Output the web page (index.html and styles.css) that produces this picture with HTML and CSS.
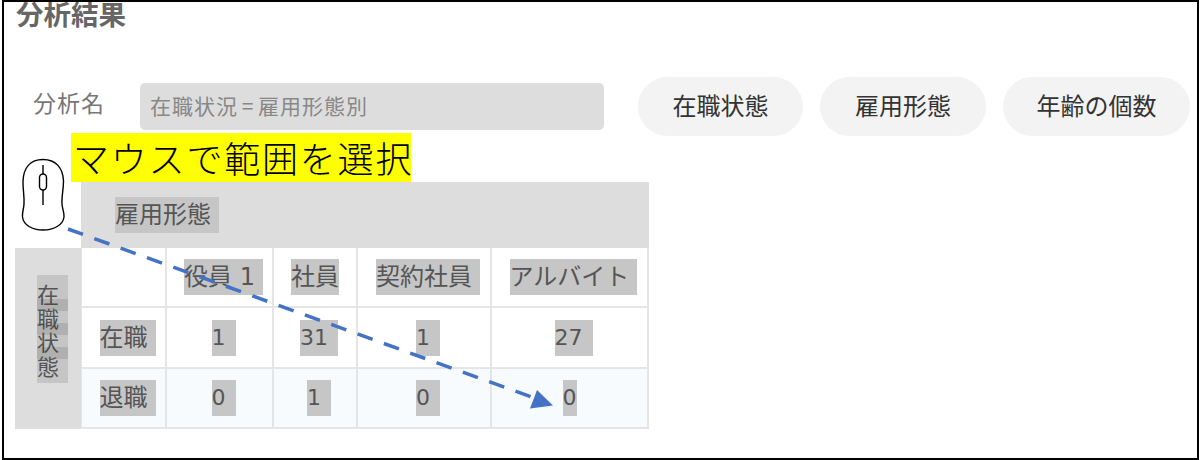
FILE: index.html
```html
<!DOCTYPE html>
<html lang="ja">
<head>
<meta charset="utf-8">
<title>分析結果</title>
<link rel="stylesheet" href="styles.css">
</head>
<body>
<main class="frame">
  <h1 class="title">分析結果</h1>
  <div class="toolbar">
    <span class="label">分析名</span>
    <div class="name-field">在職状況 = 雇用形態別</div>
    <div class="pills">
      <span class="pill pill-a">在職状態</span>
      <span class="pill pill-b">雇用形態</span>
      <span class="pill pill-c">年齢の個数</span>
    </div>
  </div>
  <section class="pivot">
    <div class="col-head"><span class="hl trail">雇用形態</span></div>
    <div class="row-head"><span class="vertical">在<br>職<br>状<br>態</span></div>
    <div class="grid">
      <div class="cell"></div>
      <div class="cell pushed"><span class="hl trail">役員 1</span></div>
      <div class="cell"><span class="hl">社員</span></div>
      <div class="cell pushed"><span class="hl trail">契約社員</span></div>
      <div class="cell pushed"><span class="hl trail">アルバイト</span></div>

      <div class="cell pushed"><span class="hl trail">在職</span></div>
      <div class="cell pushed"><span class="hl num trail">1</span></div>
      <div class="cell pushed"><span class="hl num trail">31</span></div>
      <div class="cell pushed"><span class="hl num trail">1</span></div>
      <div class="cell pushed"><span class="hl num trail">27</span></div>

      <div class="cell tint pushed"><span class="hl trail">退職</span></div>
      <div class="cell tint pushed"><span class="hl num trail">0</span></div>
      <div class="cell tint pushed"><span class="hl num trail">1</span></div>
      <div class="cell tint pushed"><span class="hl num trail">0</span></div>
      <div class="cell tint"><span class="hl num">0</span></div>
    </div>
  </section>
  <div class="callout">マウスで範囲を選択</div>
  <svg class="overlay" viewBox="0 0 1200 460" aria-hidden="true">
    <path class="mouse" d="M43 159.500C30 159.500 23.500 168 23 181C22.800 190 24.500 196 24 204C23.500 210 22 213 22.500 217C23.500 225 32 230 43 230C54 230 63 225 64 217C64.500 213 62.500 210 62 204C61.500 196 63.500 190 63.500 181C63 168 56 159.500 43 159.500Z"/>
    <path class="mouse" d="M43 165V174M43 190V205"/>
    <rect class="mouse" x="39.500" y="174" width="7" height="16" rx="3.500"/>
    <path class="arrow-line" d="M68 229L537 399"/>
    <path class="arrow-head" d="M537 390L530 408.500L553 405.500Z"/>
  </svg>
</main>
</body>
</html>
```
FILE: styles.css
```css
* { box-sizing: border-box; }
html, body { margin: 0; padding: 0; background: #fff; }
body {
  width: 1200px;
  height: 460px;
  overflow: hidden;
  font-family: "DejaVu Sans", "Noto Sans CJK JP", sans-serif;
}
.frame {
  position: relative;
  width: 1197px;
  height: 460px;
  margin-left: 2px;
  padding: 0 0 0 11px;
  border: 2px solid #000;
  overflow: hidden;
}
.title {
  margin: 0 0 0 1px;
  height: 81px;
  font-size: 27.500px;
  line-height: 23px;
  font-weight: 700;
  color: #666;
  font-family: "Noto Sans CJK JP", sans-serif;
}
.toolbar {
  display: flex;
  align-items: flex-start;
  height: 99px;
}
.label {
  width: 125px;
  padding-left: 18px;
  margin-top: 3px;
  font-size: 23px;
  line-height: 32px;
  letter-spacing: 1px;
  color: #777;
  font-family: "Noto Sans CJK JP", sans-serif;
}
.name-field {
  width: 464px;
  height: 47px;
  padding: 0 0 2px 10px;
  background: #ddd;
  border-radius: 5px;
  font-size: 21px;
  line-height: 45px;
  letter-spacing: 1px;
  word-spacing: -2px;
  color: #888;
  font-family: "Noto Sans CJK JP", sans-serif;
}
.pills {
  display: flex;
  gap: 17px;
  margin-left: 34px;
  margin-top: -6px;
}
.pill {
  display: flex;
  align-items: center;
  justify-content: center;
  height: 59px;
  padding-bottom: 4px;
  background: #f3f3f3;
  border-radius: 30px;
  font-size: 24px;
  color: #333;
  font-family: "Noto Sans CJK JP", sans-serif;
}
.pill-a { width: 165px; }
.pill-b { width: 166px; }
.pill-c { width: 187px; }
.pivot {
  display: grid;
  grid-template-columns: 66px 568px;
  grid-template-rows: 66px 181px;
}
.col-head {
  grid-column: 2;
  grid-row: 1;
  display: flex;
  align-items: center;
  padding-left: 34px;
  background: #ddd;
}
.row-head {
  grid-column: 1;
  grid-row: 2;
  padding: 33px 0 0 22px;
  background: #ddd;
  font-size: 22px;
  line-height: 24px;
  font-family: "Noto Sans CJK JP", sans-serif;
}
.vertical {
  color: #555;
  background: rgba(0, 0, 0, .105);
  padding: 2px 9px 2px 0;
  -webkit-box-decoration-break: clone;
  box-decoration-break: clone;
}
.grid {
  grid-column: 2;
  grid-row: 2;
  display: grid;
  grid-template-columns: 83px 105px 82px 132px 155px;
  grid-template-rows: 58px 59px 58px;
  gap: 2px;
  padding: 0 2px 2px 1px;
  background: #e5e5e5;
}
.cell {
  display: flex;
  align-items: center;
  justify-content: center;
  background: #fff;
}
.tint { background: #f8fbfd; }
.pushed { padding-left: 8px; }
.hl {
  display: inline-block;
  height: 36px;
  line-height: 36px;
  background: #c6c6c6;
  font-size: 24px;
  color: #555;
  white-space: nowrap;
}
.num { font-size: 22px; }
.trail { padding-right: 8px; }
.num.trail { padding-right: 10px; }
.callout {
  position: absolute;
  left: 67px;
  top: 131px;
  width: 340px;
  height: 49px;
  padding-left: 2px;
  background: #ff0;
  color: #000;
  font-size: 36px;
  line-height: 49px;
  letter-spacing: 1.800px;
  font-weight: 300;
  white-space: nowrap;
  font-family: "Noto Sans CJK JP", sans-serif;
}
.overlay {
  position: absolute;
  left: -4px;
  top: -2px;
  width: 1200px;
  height: 460px;
  pointer-events: none;
}
.mouse { fill: #fff; stroke: #000; stroke-width: 1.400; }
.arrow-line { fill: none; stroke: #4472c4; stroke-width: 3.500; stroke-dasharray: 16 12; }
.arrow-head { fill: #4472c4; }
```
